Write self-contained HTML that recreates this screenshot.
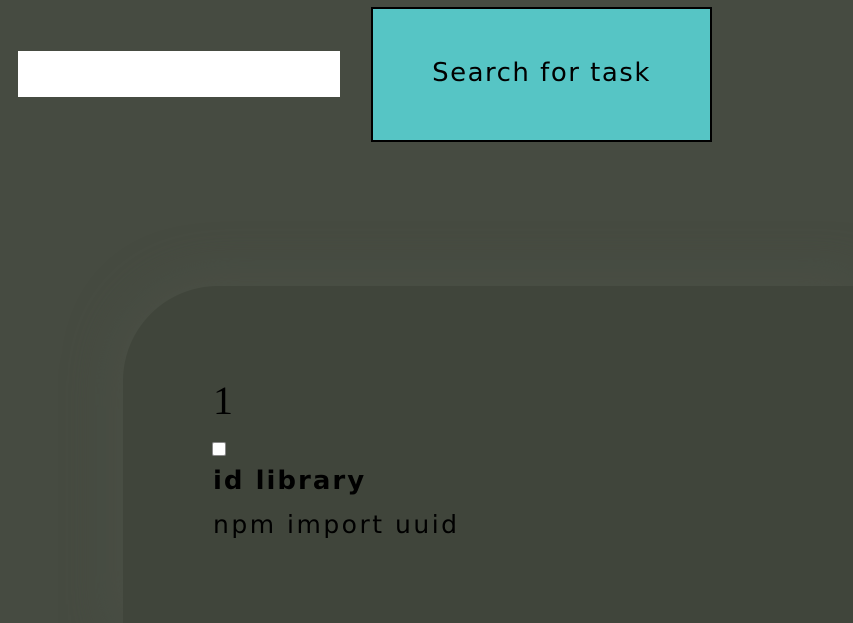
<!DOCTYPE html>
<html><head><style>
html,body{margin:0;padding:0;width:853px;height:623px;overflow:hidden;background:#464b41;position:relative;}
.inp{position:absolute;left:18px;top:51px;width:322px;height:46px;background:#fff;}
.btn{position:absolute;left:371px;top:7px;width:337px;height:131px;background:#56c5c5;border:2px solid #000;font-family:"DejaVu Sans",sans-serif;font-size:26px;display:flex;align-items:center;justify-content:center;color:#000;letter-spacing:1.5px;padding-bottom:4px;box-sizing:border-box;width:341px;height:135px;}
.card{position:absolute;left:123px;top:286px;width:730px;height:337px;background:#40453b;border-radius:95px 0 0 0;box-shadow:0 0 50px 5px #4b5046;}
.num{position:absolute;left:213px;top:377px;font-family:"Liberation Serif",serif;font-size:40px;color:#000;}
.cb{position:absolute;left:212px;top:442px;width:12px;height:12px;background:#fff;border:1px solid #888;border-radius:2px;}
.t1{position:absolute;left:213px;top:466px;font-family:"DejaVu Sans",sans-serif;font-weight:bold;font-size:26px;color:#000;letter-spacing:2px;}
.t2{position:absolute;left:213px;top:510px;font-family:"DejaVu Sans",sans-serif;font-size:25px;color:#000;letter-spacing:2.5px;}
</style></head><body>
<div class="inp"></div>
<div class="btn">Search for task</div>
<div class="card"></div>
<div class="num">1</div>
<div class="cb"></div>
<div class="t1">id library</div>
<div class="t2">npm import uuid</div>
</body></html>
